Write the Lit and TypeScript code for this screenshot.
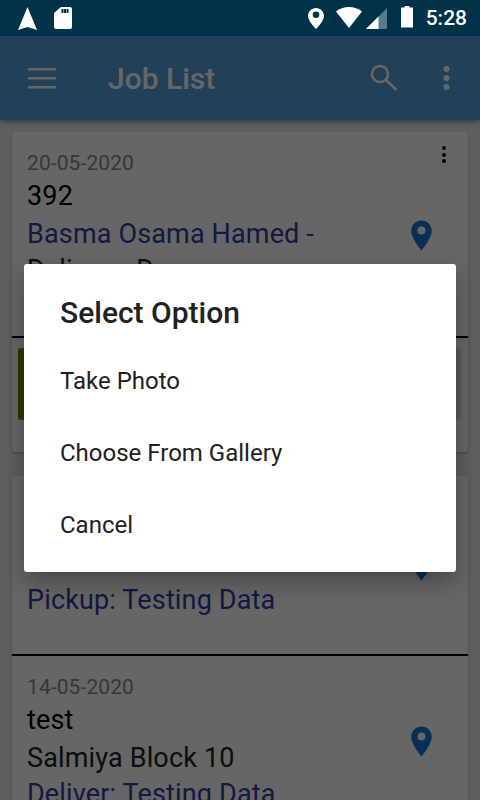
import { LitElement, html, css, svg } from "lit";
import { customElement } from "lit/decorators.js";

const pin = svg`<path fill-rule="evenodd" d="M12 2C7.900 2 4.500 5.400 4.500 9.600c0 5.400 7.500 14.400 7.500 14.400s7.500-9 7.500-14.400C19.500 5.400 16.100 2 12 2zm0 10.300a2.900 2.900 0 1 1 0-5.800 2.900 2.900 0 0 1 0 5.800z"/>`;

@customElement("app-root")
export class AppRoot extends LitElement {
  static styles = css`
    :host {
      display: block;
      position: relative;
      width: 480px;
      height: 800px;
      overflow: hidden;
      background: #eeeeee;
      font-family: Roboto, "Liberation Sans", sans-serif;
    }
    .status {
      position: relative;
      z-index: 3;
      height: 36px;
      background: #003249;
      display: flex;
      align-items: center;
      padding: 0 13px 0 18px;
      color: #fff;
    }
    .status svg { display: block; fill: #fff; height: 24px; }
    .status .left { display: flex; align-items: center; gap: 17px; flex: 1; }
    .status .right { display: flex; align-items: center; }
    .wifi { margin-left: 12px; }
    .signal { margin-left: 4px; }
    .battery { margin-left: 14px; }
    .clock { font-size: 21px; font-weight: 500; margin-left: 13px; line-height: 36px; }
    .bar {
      height: 84px;
      background: #55a2de;
      display: flex;
      align-items: center;
      color: #fff;
      padding: 0 29px 0 28px;
      box-shadow: 0 2px 6px rgba(0,0,0,.4);
      position: relative;
      z-index: 1;
    }
    .bar svg { display: block; }
    .bar h1 {
      margin: 0 0 0 48px;
      font-size: 30px;
      font-weight: 500;
      flex: 1;
    }
    .bar .dots { margin-left: 44px; }
    .list { padding: 12px 12px 0; display: flex; flex-direction: column; gap: 24px; }
    .card {
      background: #fff;
      border-radius: 3px;
      box-shadow: 0 1px 3px rgba(0,0,0,.3);
    }
    .first { position: relative; }
    .job { display: flex; align-items: center; padding: 17px 30.500px 12px 15px; }
    .job.late { padding: 42px 30.500px 36px 15px; }
    .col { flex: 1; min-width: 0; }
    .line { font-size: 27px; line-height: 36px; letter-spacing: .15px; color: #222222; }
    .date { font-size: 21px; line-height: 28px; letter-spacing: .1px; color: #8a8a8a; }
    .name { line-height: 39px; color: #000; }
    .hidden-name { line-height: 32px; margin-bottom: 4px; }
    .blue { color: #303f9f; }
    .pin { width: 33px; height: 33px; margin-bottom: 3px; fill: #1976d2; display: block; }
    .late .pin { margin-bottom: 6px; }
    .more {
      position: absolute;
      right: 22px;
      top: 14px;
      display: flex;
      flex-direction: column;
      gap: 2.700px;
    }
    .more i { width: 4px; height: 4px; border-radius: 50%; background: #000; display: block; }
    .hr { height: 2px; background: #000; }
    .actions { display: flex; padding: 10px 7px 32px 6px; gap: 8px; }
    .btn { flex: 1; height: 72px; border-radius: 3px; background: #e0e0e0; }
    .btn.green { background: #6b9100; }
    .scrim {
      position: absolute;
      inset: 0;
      background: rgba(0,0,0,.6);
      z-index: 2;
    }
    .dialog {
      position: absolute;
      left: 24px;
      top: 264px;
      width: 432px;
      height: 308px;
      background: #fff;
      border-radius: 3px;
      z-index: 3;
      box-shadow: 0 10px 24px rgba(0,0,0,.3);
      box-sizing: border-box;
      padding: 30px 36px 0;
    }
    .dialog h2 {
      margin: 0 0 13px;
      font-size: 30px;
      line-height: 38px;
      font-weight: 500;
      color: #212121;
    }
    .opt { height: 72px; line-height: 72px; font-size: 24px; color: #212121; }
  `;

  render() {
    return html`
      <div class="status">
        <div class="left">
          <svg width="19" viewBox="0 0 19 24"><path d="M9.500 1 19 24 9.500 21 0 24z"/></svg>
          <svg width="18" viewBox="0 0 18 24"><path fill-rule="evenodd" d="M7 1h9a2 2 0 0 1 2 2v18a2 2 0 0 1-2 2H2a2 2 0 0 1-2-2V7zM7.500 3v4h2V3zM10 3v4h2V3zM12.500 3v4h2V3z"/></svg>
        </div>
        <div class="right">
          <svg width="16" viewBox="0 0 16 24"><path fill-rule="evenodd" d="M8 2C3.600 2 0 5.600 0 10c0 5.500 8 13 8 13s8-7.500 8-13c0-4.400-3.600-8-8-8zm0 10a3.300 3.300 0 1 1 0-6.600A3.300 3.300 0 0 1 8 12z"/></svg>
          <svg class="wifi" width="26" viewBox="0 0 26 24"><path d="M13 22 0 5.500C3.500 2.700 8 1 13 1s9.500 1.700 13 4.500z"/></svg>
          <svg class="signal" width="21" viewBox="0 0 21 24"><path d="M21 2v21H0z" fill-opacity=".35"/><path d="M12.500 10.500V23H0z"/></svg>
          <svg class="battery" width="12" viewBox="0 0 12 24"><path d="M3.500 0H8.500V1.500H12V21.500H0V1.500H3.500z"/></svg>
          <span class="clock">5:28</span>
        </div>
      </div>
      <div class="bar">
        <svg width="32" height="32" viewBox="0 0 32 32" fill="#fff"><rect x="0" y="6" width="28" height="2.500"/><rect x="0" y="15" width="28" height="2.500"/><rect x="0" y="24" width="28" height="2.500"/></svg>
        <h1>Job List</h1>
        <svg width="32" height="32" viewBox="0 0 32 32" fill="none" stroke="#fff" stroke-width="2.500"><circle cx="13" cy="12" r="8"/><path d="M19 18l10.500 10"/></svg>
        <svg class="dots" width="8" height="26" viewBox="0 0 8 26" fill="#fff"><circle cx="3.500" cy="4" r="3"/><circle cx="3.500" cy="13" r="3"/><circle cx="3.500" cy="22" r="3"/></svg>
      </div>
      <div class="list">
        <div class="card first">
          <div class="more"><i></i><i></i><i></i></div>
          <div class="job">
            <div class="col">
              <div class="line date">20-05-2020</div>
              <div class="line name">392</div>
              <div class="line blue">Basma Osama Hamed -</div>
              <div class="line">Delivery: Door</div>
              <div class="line">Testing Data</div>
            </div>
            <svg class="pin" viewBox="0 1 24 24">${pin}</svg>
          </div>
          <div class="hr"></div>
          <div class="actions"><div class="btn green"></div><div class="btn"></div></div>
        </div>
        <div class="card">
          <div class="job late">
            <div class="col">
              <div class="line date">15-05-2020</div>
              <div class="line hidden-name">Kuwait Area 5</div>
              <div class="line blue">Pickup: Testing Data</div>
            </div>
            <svg class="pin" viewBox="0 1 24 24">${pin}</svg>
          </div>
          <div class="hr"></div>
          <div class="job">
            <div class="col">
              <div class="line date">14-05-2020</div>
              <div class="line name">test</div>
              <div class="line">Salmiya Block 10</div>
              <div class="line blue">Deliver: Testing Data</div>
            </div>
            <svg class="pin" viewBox="0 1 24 24">${pin}</svg>
          </div>
        </div>
      </div>
      <div class="scrim"></div>
      <div class="dialog">
        <h2>Select Option</h2>
        <div class="opt">Take Photo</div>
        <div class="opt">Choose From Gallery</div>
        <div class="opt">Cancel</div>
      </div>
    `;
  }
}
